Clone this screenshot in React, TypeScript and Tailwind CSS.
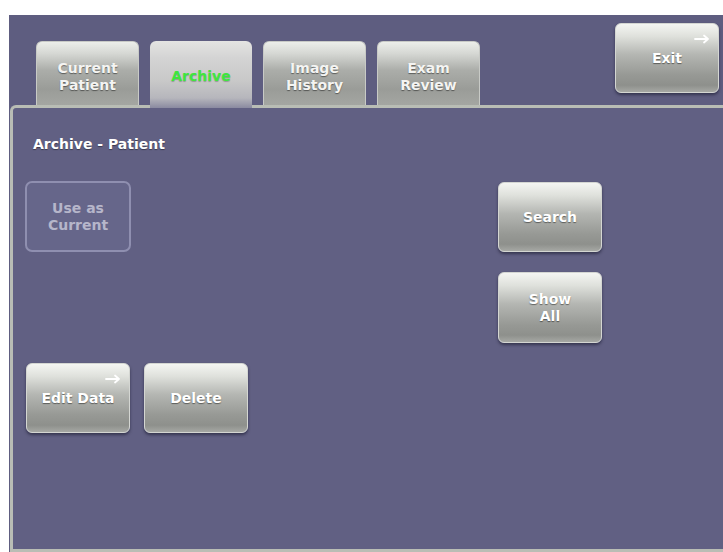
import React from "react";

const font = { fontFamily: '"DejaVu Sans", Verdana, sans-serif' };

function Arrow({ className }: { className: string }) {
  return (
    <svg className={className} width="16" height="10" viewBox="0 0 16 10" fill="none">
      <path d="M1 5H14M10 1.5L14 5L10 8.5" stroke="white" strokeWidth="1.8" strokeLinecap="round" strokeLinejoin="round" />
    </svg>
  );
}

function Btn({ label, arrow, w = "w-[104px]", h = "h-[70px]" }: { label: React.ReactNode; arrow?: boolean; w?: string; h?: string }) {
  return (
    <div
      className={`relative ${w} ${h} rounded-[6px] border border-[#d4d6d2] bg-[linear-gradient(to_bottom,#f4f5f2_0%,#dfe1dc_18%,#b4b6b2_45%,#979995_75%,#8e908c_90%,#a6a8a4_100%)] shadow-[0_2px_3px_rgba(20,20,40,0.55)] flex items-center justify-center text-center text-white font-bold text-[14px] leading-[17px] [text-shadow:0_1px_1px_rgba(0,0,0,0.45)]`}
    >
      {arrow && <Arrow className="absolute right-[8px] top-[10px]" />}
      <span>{label}</span>
    </div>
  );
}

function Tab({ label, active }: { label: React.ReactNode; active?: boolean }) {
  if (active) {
    return (
      <div className="relative z-10 -mb-[3px] w-[102px] h-[67px] rounded-t-[6px] bg-[linear-gradient(to_bottom,#e4e4e2_0%,#d4d4d4_25%,#c8c8c8_60%,#b6b6bc_85%,#8a8aa0_100%)] flex items-center justify-center pt-[4px] text-center font-bold text-[14px] leading-[17px] text-[#3ee63e] [text-shadow:0_1px_1px_rgba(0,0,0,0.25)]">
        {label}
      </div>
    );
  }
  return (
    <div className="w-[103px] h-[64px] rounded-t-[6px] border-x border-t border-[#c8cac6] bg-[linear-gradient(to_bottom,#eceeea_0%,#d6d8d4_18%,#abada9_45%,#9a9c98_75%,#a4a6a2_100%)] flex items-center justify-center pt-[7px] text-center font-bold text-[14px] leading-[17px] text-[#f4f4f2] [text-shadow:0_1px_1px_rgba(0,0,0,0.45)]">
      {label}
    </div>
  );
}

export default function App() {
  return (
    <div className="w-[723px] h-[552px] bg-white overflow-hidden" style={font}>
      <div className="ml-[9px] mt-[15px] h-[537px] bg-[#5e5d80] flex flex-col">
        <div className="h-[90px] flex items-end pl-[27px] pr-[4px]">
          <div className="flex items-end gap-[11px]">
            <Tab label={<>Current<br />Patient</>} />
            <Tab label="Archive" active />
            <Tab label={<>Image<br />History</>} />
            <Tab label={<>Exam<br />Review</>} />
          </div>
          <div className="ml-auto self-start mt-[8px]">
            <Btn label="Exit" arrow />
          </div>
        </div>
        <div className="ml-[1px] flex-1 rounded-tl-[6px] border-l-[3px] border-t-[3px] border-b-[3px] border-[#b9bdb5] bg-[#616083] pl-[12px] pt-[28px]">
          <div className="pl-[8px] text-white font-bold text-[14px] leading-[16px] [text-shadow:0_1px_1px_rgba(0,0,0,0.4)]">
            Archive - Patient
          </div>
          <div className="flex mt-[29px]">
            <div className="w-[106px] h-[71px] rounded-[7px] border-2 border-[#8f8fb0] bg-[#66668a] flex items-center justify-center text-center font-bold text-[14px] leading-[17px] text-[#b6b6ca]">
              <span>Use as<br />Current</span>
            </div>
            <div className="ml-[367px] mt-[1px] flex flex-col gap-[20px]">
              <Btn label="Search" />
              <Btn label={<>Show<br />All</>} h="h-[71px]" />
            </div>
          </div>
          <div className="flex gap-[14px] ml-[1px] mt-[20px]">
            <Btn label="Edit Data" arrow />
            <Btn label="Delete" />
          </div>
        </div>
      </div>
    </div>
  );
}
